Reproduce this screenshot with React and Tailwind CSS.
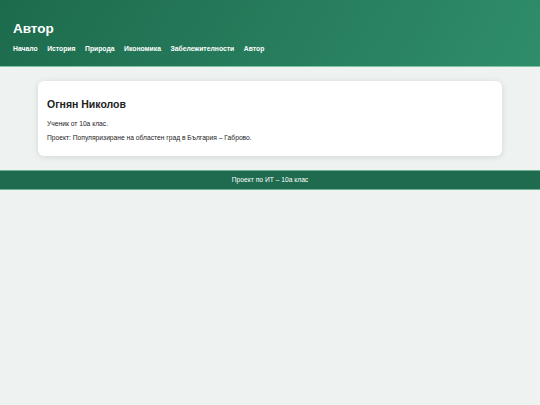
import React from 'react';

const links = ['Начало', 'История', 'Природа', 'Икономика', 'Забележителности', 'Автор'];

export default function App() {
  return (
    <div className="min-h-[405px] bg-[#eef2f0] font-['Liberation_Sans',Arial,sans-serif] text-[#222]">
      <header className="h-[67px] bg-[linear-gradient(120deg,#1d6b4d,#2f8d6b)] px-[13px] pt-[21px] text-white border-b border-[#7fc4a3]">
        <h1 className="text-[13.5px] font-bold leading-[16px]">Автор</h1>
        <nav className="mt-[7px] flex gap-[9.5px] text-[6.8px] font-bold leading-[9px]">
          {links.map((l) => (
            <a key={l}>{l}</a>
          ))}
        </nav>
      </header>

      <main className="px-[38px] pt-[14px] pb-[14px]">
        <div className="rounded-[6px] bg-white px-[9px] pt-[17px] pb-[14px] shadow-[0_1px_6px_rgba(0,0,0,0.12)]">
          <h2 className="text-[10.5px] font-bold leading-[13px]">Огнян Николов</h2>
          <p className="mt-[8px] text-[6.7px] leading-[9px]">Ученик от 10а клас.</p>
          <p className="mt-[5px] text-[6.7px] leading-[9px]">Проект: Популяризиране на областен град в България – Габрово.</p>
        </div>
      </main>

      <footer className="h-[20px] flex items-center justify-center bg-[#1f6b4f] text-[6.7px] text-white border-y border-[#6fb393]">
        Проект по ИТ – 10а клас
      </footer>
    </div>
  );
}
